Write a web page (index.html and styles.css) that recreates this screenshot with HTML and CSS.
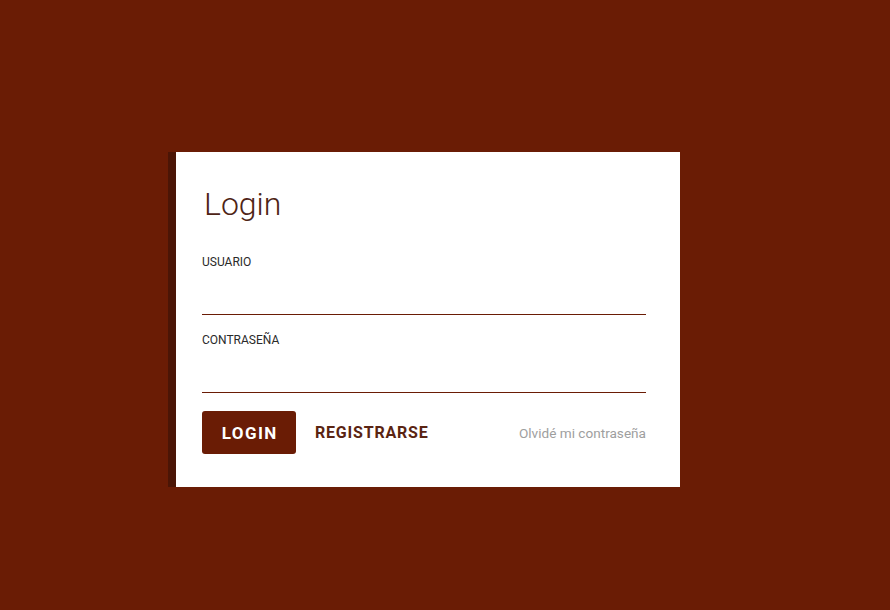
FILE: index.html
```html
<!DOCTYPE html>
<html lang="es">
<head>
<meta charset="utf-8">
<title>Login</title>
<link rel="stylesheet" href="styles.css">
</head>
<body>
<main class="page">
  <form class="card">
    <h1 class="title">Login</h1>
    <label class="field">
      <span class="label">USUARIO</span>
      <span class="input"></span>
    </label>
    <label class="field">
      <span class="label">CONTRASEÑA</span>
      <span class="input"></span>
    </label>
    <div class="actions">
      <button type="button" class="btn-primary">LOGIN</button>
      <button type="button" class="btn-flat">REGISTRARSE</button>
      <a class="forgot">Olvidé mi contraseña</a>
    </div>
  </form>
</main>
</body>
</html>
```

FILE: styles.css
```css
html, body {
  margin: 0;
  padding: 0;
  height: 100%;
}
body {
  background: #6a1c05;
  font-family: Roboto, "Liberation Sans", sans-serif;
}
.page {
  height: 100%;
  display: flex;
  justify-content: flex-start;
  align-items: flex-start;
  padding: 152px 0 0 176px;
  box-sizing: border-box;
}
.card {
  width: 504px;
  height: 335px;
  box-sizing: border-box;
  background: #fff;
  box-shadow: -8px 0 0 #4b1506;
  padding: 30px 34px 0 26px;
  display: flex;
  flex-direction: column;
}
.title {
  margin: 0 0 0 2px;
  font-weight: 300;
  font-size: 32px;
  line-height: 44px;
  color: #4e2416;
}
.field {
  display: flex;
  flex-direction: column;
}
.field:first-of-type {
  margin-top: 28px;
}
.label {
  font-size: 12px;
  line-height: 16px;
  color: #2a2a2a;
}
.input {
  height: 44px;
  border-bottom: 1px solid #6a1c05;
  margin-bottom: 13px;
}
.field + .field .label {
  margin-top: 4px;
}
.actions {
  display: flex;
  align-items: center;
  margin-top: 5px;
}
.btn-primary {
  width: 94px;
  height: 43px;
  border: none;
  border-radius: 3px;
  background: #6a1c05;
  color: #fff;
  font-family: inherit;
  font-weight: 700;
  font-size: 17px;
  letter-spacing: 1.4px;
  text-indent: 1.4px;
  padding: 0;
}
.btn-flat {
  margin-left: 19px;
  border: none;
  background: none;
  padding: 0;
  color: #5a2412;
  font-family: inherit;
  font-weight: 700;
  font-size: 16px;
  letter-spacing: 0.8px;
}
.forgot {
  margin-left: auto;
  font-size: 13.6px;
  color: #9e9e9e;
}
```
